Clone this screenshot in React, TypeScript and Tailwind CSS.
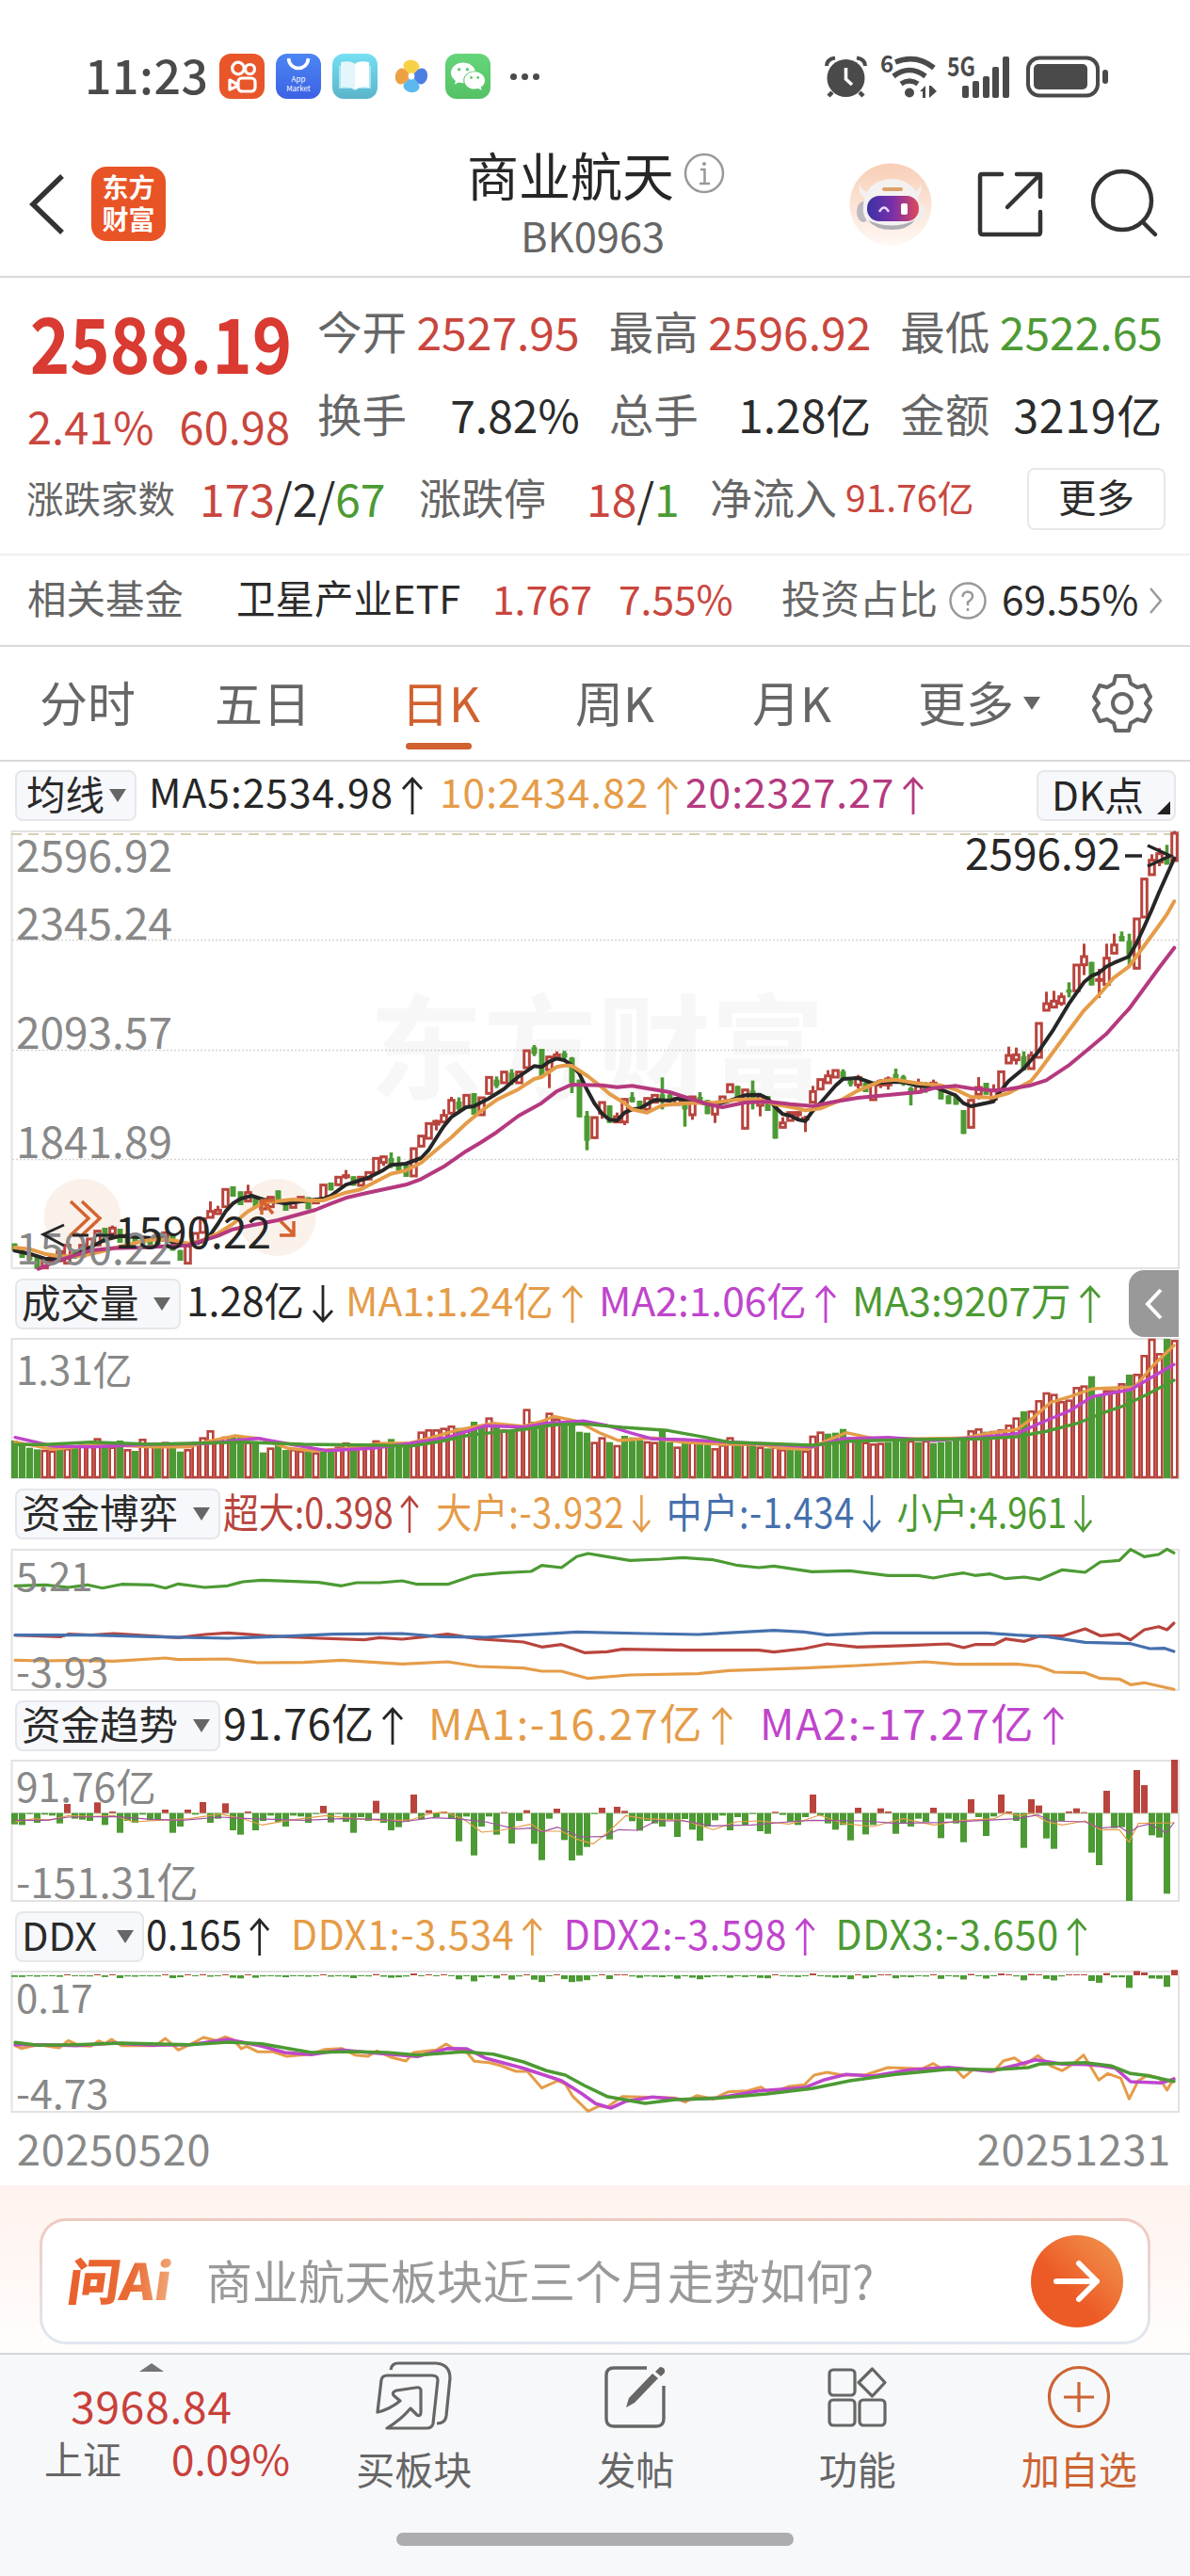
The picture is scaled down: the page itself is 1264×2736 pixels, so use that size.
import React from 'react';
import { clsx } from 'clsx';
import { IoLogoWechat } from 'react-icons/io5';

type Point = [number, number];
type Candle = [string, number, number, number?, number?];

const RED = '#b8443d';
const GREEN = '#4c9a33';
const ORANGE = '#e59c48';
const PURPLE = '#bf45cc';
const MAGENTA = '#b5397f';
const BLUE = '#4570ad';
const FONT = '"Noto Sans CJK SC", "Noto Sans", sans-serif';

// [direction, body top, body bottom, high, low]
const candles: Candle[] = [
  ['g', 1352, 1375], ['g', 1370, 1398], ['g', 1380, 1405], ['g', 1393, 1433], ['r', 1400, 1433], ['r', 1393, 1415],
  ['r', 1375, 1410], ['r', 1355, 1418], ['g', 1380, 1400], ['r', 1355, 1395], ['r', 1335, 1385], ['r', 1310, 1360],
  ['g', 1302, 1350], ['r', 1300, 1325, 1295, 1335], ['g', 1305, 1350], ['g', 1320, 1360], ['g', 1325, 1355], ['g', 1330, 1355],
  ['g', 1335, 1358], ['g', 1325, 1360], ['r', 1315, 1345], ['g', 1325, 1375], ['g', 1373, 1407], ['r', 1355, 1418],
  ['r', 1317, 1355], ['r', 1270, 1320], ['r', 1247, 1272, 1218], ['r', 1243, 1260, 1232], ['r', 1177, 1238], ['g', 1170, 1203],
  ['g', 1186, 1230], ['r', 1187, 1220, 1165], ['g', 1205, 1237], ['r', 1218, 1245], ['r', 1202, 1238], ['g', 1183, 1218],
  ['g', 1215, 1248], ['r', 1220, 1240], ['r', 1202, 1222], ['g', 1205, 1243], ['r', 1212, 1226], ['r', 1163, 1212],
  ['g', 1158, 1183], ['r', 1138, 1168], ['r', 1133, 1143, 1118, 1147], ['g', 1138, 1168], ['r', 1138, 1170], ['r', 1123, 1150],
  ['r', 1078, 1130], ['r', 1073, 1097, 1073, 1105], ['g', 1080, 1105, 1062, 1112], ['g', 1095, 1120, 1075, 1128], ['g', 1100, 1140], ['r', 1047, 1140],
  ['r', 1007, 1045], ['r', 967, 1020], ['r', 960, 975, 958, 992], ['r', 941, 968, 925], ['r', 893, 940, 885], ['g', 900, 925, 887, 935],
  ['r', 877, 920], ['g', 873, 942], ['r', 885, 945], ['r', 820, 877], ['g', 830, 850, 820, 857], ['r', 803, 843],
  ['g', 808, 840, 797, 847], ['r', 803, 843], ['r', 735, 795], ['g', 727, 748, 720, 755], ['g', 732, 818], ['r', 755, 802, 753, 857],
  ['r', 748, 765, 740], ['g', 745, 760, 738, 765], ['g', 760, 840, 758, 873], ['g', 830, 950], ['g', 945, 1025, 930, 1055], ['r', 948, 1018],
  ['r', 900, 940, 900, 955], ['g', 912, 968], ['r', 945, 968, 935], ['r', 890, 968, 890, 975], ['g', 885, 902, 870], ['g', 897, 928],
  ['r', 887, 928], ['r', 877, 905], ['g', 877, 897, 823, 925], ['g', 878, 892, 872, 900], ['r', 887, 912], ['g', 890, 925, 885, 980],
  ['r', 882, 945, 882, 958], ['g', 885, 900, 870, 905], ['g', 895, 940], ['r', 908, 943, 905, 968], ['r', 882, 905], ['r', 843, 872],
  ['g', 850, 895], ['r', 860, 988], ['g', 865, 905, 833, 925], ['r', 880, 915, 878, 947], ['g', 882, 930], ['g', 915, 1018],
  ['r', 965, 985, 950], ['r', 932, 963], ['r', 932, 945, 930, 952], ['r', 950, 953, 945, 997], ['r', 865, 905, 850], ['r', 827, 863],
  ['r', 815, 843, 800], ['r', 798, 825], ['g', 803, 828, 797], ['g', 833, 845, 828, 852], ['r', 820, 850, 815, 858], ['g', 840, 870],
  ['r', 842, 897], ['r', 832, 850, 828, 857], ['r', 825, 850, 820, 862], ['g', 812, 835, 795, 842], ['g', 820, 845, 815, 850], ['g', 857, 875, 853, 912],
  ['r', 838, 873, 827], ['g', 842, 865, 838, 872], ['r', 838, 850, 830], ['g', 860, 893], ['g', 880, 908], ['g', 885, 910],
  ['g', 927, 1003], ['r', 893, 985], ['r', 852, 880, 822, 893], ['g', 840, 878], ['r', 862, 895, 845],
  ['r', 802, 868], ['r', 750, 780, 725], ['r', 748, 770, 728, 782], ['g', 755, 800, 740], ['r', 750, 798, 740], ['r', 648, 762],
  ['r', 585, 612, 550], ['r', 577, 602, 547], ['r', 563, 590, 553, 595], ['g', 543, 553, 520, 568], ['r', 462, 550], ['r', 435, 467, 397, 497],
  ['g', 455, 530], ['r', 508, 515, 477, 570], ['r', 440, 530, 397], ['r', 398, 430, 365], ['g', 372, 390, 358], ['g', 388, 435, 365, 470],
  ['r', 315, 478], ['r', 188, 315], ['r', 128, 180, 112], ['r', 107, 140, 92, 150], ['g', 120, 145, 82], ['r', 42, 135, 38],
];

const ma5Left: Point[] = [[38, 1375], [77, 1385], [116, 1400], [155, 1405], [195, 1390], [234, 1365], [273, 1340], [312, 1328], [371, 1333], [430, 1338], [469, 1355], [489, 1358], [528, 1345], [547, 1325], [567, 1290], [587, 1250], [606, 1225], [626, 1210], [655, 1200], [685, 1212], [743, 1225], [802, 1215], [841, 1210], [861, 1200], [900, 1165], [958, 1143], [998, 1118], [1017, 1102], [1056, 1098], [1096, 1080], [1115, 1055], [1154, 980], [1174, 950], [1213, 918], [1233, 915], [1272, 890], [1311, 860], [1350, 820], [1390, 787], [1409, 790], [1429, 773], [1448, 763], [1468, 768], [1487, 783], [1507, 810]];
const ma5Right: Point[] = [[0, 865], [18, 905], [38, 938], [57, 958], [77, 960], [97, 935], [116, 925], [136, 922], [175, 895], [214, 897], [234, 890], [273, 900], [332, 910], [371, 897], [410, 880], [449, 878], [469, 890], [489, 918], [508, 940], [528, 945], [547, 957], [567, 962], [586, 930], [606, 905], [645, 850], [665, 828], [704, 825], [743, 842], [782, 838], [821, 838], [861, 850], [900, 852], [958, 880], [978, 905], [998, 915], [1056, 900], [1076, 865], [1096, 835], [1135, 795], [1174, 740], [1213, 670], [1252, 590], [1292, 520], [1311, 500], [1331, 490], [1350, 470], [1370, 458], [1409, 438], [1429, 395], [1448, 345], [1468, 290], [1487, 235], [1507, 180], [1527, 125]];
const ma10Left: Point[] = [[38, 1365], [77, 1370], [116, 1385], [155, 1393], [195, 1392], [234, 1387], [293, 1368], [371, 1345], [410, 1338], [450, 1342], [489, 1352], [528, 1342], [567, 1320], [606, 1290], [645, 1250], [685, 1222], [723, 1217], [763, 1212], [802, 1215], [841, 1215], [900, 1190], [939, 1180], [978, 1155], [1017, 1130], [1056, 1120], [1096, 1095], [1154, 1035], [1174, 1015], [1213, 970], [1252, 930], [1292, 895], [1350, 860], [1390, 828], [1409, 822], [1448, 790], [1468, 785], [1487, 785]];
const ma10Right: Point[] = [[0, 818], [38, 855], [57, 875], [97, 905], [116, 925], [155, 935], [194, 912], [253, 905], [332, 903], [391, 893], [449, 895], [489, 908], [547, 922], [567, 928], [606, 922], [665, 892], [704, 865], [763, 835], [802, 830], [861, 842], [919, 848], [958, 862], [998, 885], [1056, 887], [1096, 873], [1154, 835], [1174, 805], [1213, 740], [1252, 675], [1292, 610], [1331, 560], [1370, 505], [1409, 470], [1448, 405], [1487, 340], [1507, 305], [1527, 262]];
const ma20Left: Point[] = [[100, 1433], [155, 1405], [195, 1390], [234, 1375], [293, 1367], [371, 1365], [450, 1360], [489, 1358], [567, 1328], [606, 1307], [645, 1297], [723, 1278], [821, 1245], [861, 1225], [900, 1207], [958, 1190], [1056, 1165], [1096, 1147], [1154, 1108], [1213, 1058], [1252, 1030], [1292, 998], [1350, 945], [1409, 905], [1448, 868], [1487, 846]];
const ma20Right: Point[] = [[38, 848], [77, 854], [116, 850], [155, 858], [214, 870], [273, 893], [312, 908], [351, 918], [410, 903], [469, 900], [528, 908], [586, 914], [645, 900], [704, 888], [802, 877], [861, 870], [900, 857], [958, 850], [998, 858], [1056, 865], [1096, 860], [1154, 848], [1194, 832], [1252, 785], [1311, 725], [1350, 685], [1390, 630], [1409, 605], [1448, 540], [1487, 475], [1527, 410]];

const volumeColors =
  'gggg' + 'rrgrgrrrgrgrgrrgrggrrrrrrggrggrggrrgrggrrgrrrrgggrrrrrrgrggrgrgrrggrrggggrrgrggg' +
  'rrggrgrggrrrgrgrgrrggrrrgggrgrrrgggrgrgggggrrgrrrrgrrrrrrrrggrrrgrrrrgr';
const volumes = [
  540, 555, 563, 568, 570, 572, 560, 565, 560, 555, 553, 533, 550, 560, 540, 568, 573, 535, 555, 563, 545, 548, 575, 568, 545, 530,
  508, 545, 528, 525, 530, 545, 548, 578, 563, 555, 570, 568, 572, 570, 578, 572, 565, 560, 547, 560, 555, 555, 540, 548, 535, 545,
  545, 548, 512, 505, 505, 500, 493, 500, 508, 480, 495, 467, 490, 505, 510, 500, 440, 480, 478, 452, 470, 480, 490, 512, 515, 545,
  530, 545, 555, 525, 530, 540, 543, 545, 505, 545, 560, 548, 545, 550, 553, 565, 553, 530, 545, 550, 550, 560, 565, 560, 568, 570,
  565, 572, 525, 512, 518, 515, 503, 530, 540, 545, 550, 548, 545, 540, 538, 540, 545, 540, 548, 545, 543, 540, 535, 508, 502, 512,
  510, 505, 490, 467, 447, 445, 412, 387, 392, 415, 410, 370, 365, 335, 395, 380, 380, 358, 330, 328, 268, 216, 262, 216, 220,
];

// Net capital flow per day, drawn from the zero line at 377
const flows = [
  413, 415, 380, 408, 382, 385, 410, 348, 395, 398, 402, 343, 415, 372, 440, 402, 408, 382, 400, 400, 366, 440, 420, 366, 382, 342,
  408, 395, 346, 432, 446, 372, 432, 402, 385, 405, 420, 385, 388, 408, 380, 354, 407, 380, 405, 440, 390, 402, 338, 408, 432, 422,
  405, 318, 397, 368, 390, 372, 395, 467, 388, 512, 420, 388, 446, 374, 474, 402, 368, 475, 527, 395, 363, 463, 528, 512, 485, 380,
  360, 461, 357, 370, 403, 433, 402, 410, 420, 400, 453, 396, 430, 465, 420, 400, 385, 432, 390, 415, 380, 435, 443, 373, 383, 405,
  415, 390, 318, 385, 410, 430, 415, 464, 360, 445, 415, 362, 372, 443, 410, 420, 395, 405, 360, 457, 395, 410, 470, 333, 390, 450,
  388, 318, 372, 402, 488, 333, 353, 458, 491, 402, 372, 362, 374, 503, 543, 306, 425, 422, 657, 240, 288, 448, 455, 634, 207,
];

const volMa1: Point[] = [[20, 545], [70, 568], [130, 553], [200, 560], [250, 560], [270, 545], [310, 525], [345, 535], [380, 565], [410, 572], [450, 568], [500, 550], [540, 548], [570, 530], [600, 508], [650, 485], [690, 495], [715, 478], [730, 463], [760, 478], [790, 515], [815, 540], [860, 532], [900, 545], [950, 552], [1000, 552], [1030, 565], [1065, 568], [1090, 540], [1115, 515], [1150, 533], [1200, 535], [1270, 532], [1300, 518], [1340, 505], [1360, 470], [1385, 418], [1410, 400], [1440, 375], [1495, 370], [1520, 300], [1547, 237]];
const volMa2: Point[] = [[20, 530], [70, 558], [120, 560], [200, 552], [270, 550], [340, 533], [390, 555], [430, 572], [490, 565], [540, 550], [590, 530], [640, 493], [690, 497], [720, 485], [770, 478], [800, 492], [830, 515], [860, 535], [900, 537], [1000, 550], [1070, 560], [1110, 535], [1170, 530], [1230, 540], [1290, 530], [1340, 518], [1370, 485], [1410, 445], [1440, 400], [1490, 378], [1520, 335], [1547, 298]];
const volMa3: Point[] = [[20, 553], [60, 553], [120, 545], [200, 552], [320, 545], [400, 552], [500, 555], [540, 558], [580, 543], [620, 522], [690, 505], [730, 490], [770, 487], [820, 498], [880, 508], [930, 530], [960, 545], [1070, 555], [1120, 542], [1200, 537], [1290, 535], [1340, 528], [1380, 510], [1420, 485], [1450, 455], [1480, 430], [1510, 395], [1547, 348]];

const retail: Point[] = [[20, 1003], [60, 1000], [90, 1008], [115, 1000], [135, 1010], [160, 998], [200, 1000], [218, 1010], [235, 997], [270, 1008], [300, 1003], [320, 990], [345, 985], [380, 988], [420, 992], [450, 1003], [470, 993], [500, 993], [530, 987], [550, 998], [590, 998], [625, 970], [660, 962], [700, 957], [714, 938], [740, 945], [760, 910], [775, 900], [800, 910], [830, 922], [870, 918], [900, 913], [940, 920], [970, 937], [1000, 945], [1020, 940], [1070, 958], [1120, 955], [1170, 970], [1210, 970], [1230, 978], [1255, 967], [1270, 962], [1285, 970], [1305, 965], [1325, 980], [1350, 975], [1370, 983], [1400, 952], [1430, 960], [1450, 927], [1475, 922], [1490, 887], [1508, 910], [1527, 903], [1538, 886], [1547, 898]];
const medium: Point[] = [[20, 1160], [120, 1160], [200, 1165], [300, 1170], [360, 1165], [440, 1157], [530, 1155], [580, 1165], [640, 1167], [690, 1160], [760, 1150], [850, 1155], [920, 1158], [1020, 1145], [1060, 1150], [1090, 1160], [1150, 1153], [1300, 1153], [1340, 1160], [1380, 1165], [1430, 1183], [1490, 1187], [1515, 1203], [1535, 1202], [1547, 1212]];
const superLarge: Point[] = [[20, 1160], [80, 1165], [90, 1157], [120, 1160], [150, 1155], [200, 1163], [235, 1168], [270, 1158], [300, 1153], [350, 1162], [420, 1170], [480, 1175], [500, 1168], [530, 1173], [560, 1165], [590, 1157], [630, 1172], [690, 1182], [714, 1198], [740, 1190], [770, 1216], [800, 1213], [820, 1205], [900, 1208], [1000, 1208], [1020, 1214], [1060, 1203], [1090, 1188], [1130, 1198], [1200, 1193], [1250, 1188], [1270, 1200], [1285, 1190], [1310, 1190], [1325, 1172], [1350, 1180], [1370, 1163], [1400, 1163], [1430, 1140], [1450, 1162], [1475, 1157], [1490, 1175], [1508, 1143], [1527, 1133], [1538, 1143], [1547, 1122]];
const large: Point[] = [[20, 1240], [60, 1242], [100, 1240], [150, 1243], [218, 1233], [235, 1238], [300, 1236], [340, 1248], [400, 1247], [450, 1240], [530, 1252], [590, 1245], [630, 1260], [690, 1265], [714, 1275], [740, 1275], [775, 1298], [830, 1287], [920, 1283], [960, 1273], [1060, 1265], [1130, 1257], [1220, 1245], [1260, 1253], [1340, 1252], [1370, 1260], [1390, 1278], [1430, 1280], [1450, 1298], [1475, 1300], [1490, 1318], [1508, 1312], [1547, 1333]];

const flowMa1: Point[] = [[20, 405], [45, 395], [65, 400], [90, 385], [120, 388], [150, 385], [175, 405], [210, 400], [250, 395], [290, 380], [320, 395], [345, 415], [380, 400], [430, 385], [470, 395], [500, 400], [540, 400], [565, 380], [585, 373], [610, 395], [635, 438], [660, 432], [700, 412], [714, 435], [740, 435], [760, 460], [782, 475], [800, 440], [825, 385], [850, 395], [900, 400], [940, 430], [970, 405], [1000, 402], [1040, 412], [1060, 400], [1080, 383], [1110, 410], [1150, 420], [1190, 395], [1230, 415], [1270, 400], [1310, 395], [1325, 378], [1345, 385], [1360, 378], [1380, 405], [1400, 415], [1430, 402], [1450, 430], [1475, 430], [1488, 470], [1500, 410], [1547, 408]];
const flowMa2: Point[] = [[20, 400], [60, 400], [90, 390], [150, 388], [200, 397], [240, 400], [290, 390], [330, 395], [400, 400], [450, 395], [500, 397], [530, 405], [570, 392], [600, 395], [640, 405], [680, 428], [700, 425], [714, 437], [735, 422], [765, 453], [795, 452], [815, 430], [840, 432], [865, 402], [900, 402], [940, 418], [990, 415], [1040, 405], [1070, 400], [1140, 402], [1180, 410], [1240, 407], [1300, 400], [1340, 395], [1368, 383], [1385, 402], [1430, 405], [1450, 425], [1475, 420], [1488, 440], [1500, 420], [1515, 412], [1537, 440], [1547, 408]];

const ddx1: Point[] = [[20, 1118], [28, 1127], [50, 1115], [78, 1125], [90, 1102], [105, 1118], [120, 1120], [130, 1103], [138, 1112], [147, 1098], [160, 1118], [205, 1118], [218, 1095], [235, 1132], [250, 1115], [268, 1092], [285, 1102], [297, 1090], [308, 1100], [318, 1128], [325, 1120], [340, 1138], [360, 1138], [378, 1152], [410, 1145], [428, 1130], [450, 1127], [468, 1148], [485, 1152], [497, 1135], [515, 1155], [535, 1167], [545, 1140], [575, 1132], [588, 1113], [600, 1130], [612, 1130], [625, 1168], [645, 1172], [660, 1182], [680, 1200], [695, 1200], [714, 1253], [735, 1230], [745, 1240], [755, 1280], [775, 1327], [790, 1310], [800, 1315], [820, 1280], [870, 1283], [890, 1285], [903, 1298], [918, 1277], [940, 1288], [960, 1265], [985, 1262], [1003, 1250], [1015, 1270], [1040, 1248], [1060, 1243], [1073, 1212], [1090, 1203], [1110, 1212], [1140, 1212], [1170, 1188], [1215, 1192], [1230, 1175], [1240, 1190], [1258, 1190], [1270, 1220], [1283, 1193], [1310, 1200], [1322, 1167], [1337, 1157], [1350, 1180], [1368, 1150], [1385, 1183], [1400, 1198], [1415, 1175], [1428, 1148], [1448, 1228], [1460, 1207], [1477, 1222], [1488, 1288], [1500, 1230], [1513, 1212], [1528, 1222], [1538, 1260], [1547, 1222]];
const ddx2: Point[] = [[20, 1115], [60, 1115], [100, 1118], [150, 1110], [200, 1117], [250, 1115], [300, 1098], [345, 1120], [375, 1140], [410, 1147], [450, 1132], [500, 1143], [550, 1153], [590, 1127], [615, 1128], [640, 1158], [690, 1190], [740, 1230], [765, 1268], [785, 1303], [805, 1317], [825, 1295], [860, 1282], [900, 1290], [945, 1285], [1000, 1262], [1060, 1252], [1085, 1228], [1115, 1210], [1150, 1215], [1200, 1195], [1250, 1187], [1305, 1200], [1340, 1180], [1365, 1163], [1400, 1177], [1430, 1178], [1450, 1182], [1470, 1190], [1490, 1233], [1530, 1237], [1547, 1225]];
const ddx3: Point[] = [[20, 1108], [50, 1117], [100, 1115], [160, 1110], [250, 1115], [300, 1107], [345, 1112], [380, 1127], [410, 1140], [460, 1137], [510, 1140], [550, 1148], [610, 1138], [650, 1145], [690, 1170], [720, 1198], [745, 1212], [770, 1245], [800, 1280], [850, 1302], [890, 1290], [950, 1285], [1010, 1272], [1070, 1255], [1120, 1230], [1180, 1210], [1250, 1193], [1310, 1195], [1355, 1188], [1370, 1177], [1430, 1172], [1465, 1183], [1490, 1207], [1510, 1213], [1547, 1232]];

const joinHalves = (left: Point[], right: Point[]): Point[] => [...left, ...right.map(([x, y]): Point => [x + 1528.8, y])];
const barX = (i: number) => 15.5 + i * 8;

function Line({ data, sx, top, color, width = 4 }: { data: Point[]; sx: number; top: number; color: string; width?: number }) {
  const points = data.map(([x, y]) => `${(x * sx).toFixed(1)},${((y - top) / 3).toFixed(1)}`).join(' ');
  return <polyline points={points} fill="none" stroke={color} strokeWidth={width} strokeLinejoin="round" strokeLinecap="round" />;
}

function AxisText({ x = 17, y, children, size = 43, color = '#888888' }: { x?: number; y: number; children: string; size?: number; color?: string }) {
  return <text x={x} y={y} fontSize={size} fill={color} fontFamily={FONT}>{children}</text>;
}

function Frame({ height }: { height: number }) {
  return <rect x="12.5" y="1" width="1239.5" height={height - 2} fill="none" stroke="#e2e2e2" strokeWidth="2" />;
}

function Arrow({ down }: { down?: boolean }) {
  return (
    <svg width="24" height="40" viewBox="0 0 24 40" fill="none" stroke="currentColor" strokeWidth="2.8" className={clsx('mt-1 shrink-0', down && 'rotate-180')}>
      <path d="M12 40V2M2 13L12 2L22 13" />
    </svg>
  );
}

function Caret() {
  return (
    <svg width="18" height="14" viewBox="0 0 18 14" fill="#666">
      <path d="M0 0H18L9 14Z" />
    </svg>
  );
}

function Pill({ label, className }: { label: string; className: string }) {
  return (
    <div className={clsx('flex h-[54px] shrink-0 items-center justify-between rounded-lg border-2 border-[#e6e7ea] bg-[#f7f8fb] text-[41.5px] leading-none whitespace-nowrap text-[#2a2a2a]', className)}>
      <span className="pb-1">{label}</span>
      <Caret />
    </div>
  );
}

function Legend({ text, down, className }: { text: string; down?: boolean; className: string }) {
  return (
    <div className={clsx('flex shrink-0 items-center gap-2 pb-1 leading-none whitespace-nowrap', className)}>
      <span className="pb-1">{text}</span>
      <Arrow down={down} />
    </div>
  );
}

function StatusBar() {
  return (
    <div className="flex h-[129px] items-center pt-[33px] pl-[90px]">
      <span className="w-[143px] pb-[6px] text-[50px] leading-none font-medium tracking-[0.5px] text-[#4a4a4a]">11:23</span>
      <div className="flex gap-3">
        <div className="size-12 rounded-xl bg-[#e9562a]">
          <svg viewBox="0 0 48 48" fill="none" stroke="#fff" strokeWidth="3.2">
            <circle cx="20" cy="15.5" r="6.3" />
            <circle cx="32.5" cy="16.5" r="5" />
            <rect x="20" y="26" width="18" height="14" rx="4" />
            <path d="M11 28L18 32V35L11 38Z" strokeLinejoin="round" />
          </svg>
        </div>
        <div className="flex size-12 flex-col items-center rounded-xl bg-gradient-to-b from-[#4c86f3] to-[#3d61e4] text-[8px] leading-[9.5px] text-white">
          <svg width="48" height="22" viewBox="0 0 48 22" fill="none" stroke="#fff" strokeWidth="3.6" className="shrink-0">
            <path d="M13.500 5C14.500 19 33.500 19 34.500 5" />
          </svg>
          <span>App</span>
          <span>Market</span>
        </div>
        <div className="size-12 rounded-xl bg-gradient-to-b from-[#76e0f3] to-[#5ab4ca]">
          <svg viewBox="0 0 48 48">
            <path d="M7 13H41V37H28L24 39L20 37H7Z" fill="#a9e6f2" />
            <path d="M9 9Q20 7 24 11V38Q18 34 9 36Z" fill="#e4f6fb" />
            <path d="M39 9Q28 7 24 11V38Q30 34 39 36Z" fill="#fff" />
          </svg>
        </div>
        <svg className="size-12" viewBox="0 0 48 48">
          {['#f7d247', '#4b7fe2', '#5cb9f0', '#eda044'].map((color, i) => (
            <path key={color} d="M24 24C21 20 15 18 15.500 12C17 5 30 5 32.500 13C33 18 28 19 24 24Z" fill={color} transform={`rotate(${i * 90} 24 24)`} />
          ))}
          <circle cx="24" cy="24" r="3.400" fill="#fff" />
        </svg>
        <div className="flex size-12 items-center justify-center rounded-xl bg-gradient-to-b from-[#66d579] to-[#55c165]">
          <IoLogoWechat className="size-9 text-white" />
        </div>
      </div>
      <div className="ml-[21px] flex gap-[5px]">
        <i className="size-[7px] rounded-full bg-[#4a4a4a]" />
        <i className="size-[7px] rounded-full bg-[#4a4a4a]" />
        <i className="size-[7px] rounded-full bg-[#4a4a4a]" />
      </div>
      <svg width="320" height="60" viewBox="0 0 320 60" className="ml-[297px] overflow-visible" fill="none" stroke="#4a4a4a">
        <g>
          <circle cx="28.500" cy="32" r="20" fill="#4a4a4a" stroke="none" />
          <path d="M8 19Q8 12 17 10.500M49 19Q49 12 40 10.500" strokeWidth="4" />
          <path d="M14 47L10 51M43 47L47 51" strokeWidth="4.500" />
          <path d="M28.500 21V33L35 39" stroke="#fff" strokeWidth="3.600" />
        </g>
        <text x="65" y="26" fontSize="24" fontWeight="700" fill="#4a4a4a" stroke="none" fontFamily={FONT}>6</text>
        <g strokeWidth="5.500">
          <path d="M81 15Q103 6 122 21" />
          <path d="M79 30Q96 17 113 30" />
          <path d="M87 38Q96 32 105 38" />
          <circle cx="96" cy="47.500" r="5" fill="#4a4a4a" stroke="none" />
        </g>
        <path d="M107 46L113 40V53H110V46ZM117 40H119L125 46L117 53Z" fill="#4a4a4a" stroke="none" />
        <text x="136" y="30" fontSize="28" fontWeight="700" fill="#4a4a4a" stroke="none" fontFamily={FONT} textLength="30" lengthAdjust="spacingAndGlyphs">5G</text>
        <g fill="#4a4a4a" stroke="none">
          <rect x="152" y="40" width="7" height="13" rx="2" />
          <rect x="163" y="35" width="7" height="18" rx="2" />
          <rect x="174" y="30" width="7" height="23" rx="2" />
          <rect x="184" y="20" width="7" height="33" rx="2" />
          <rect x="195" y="9" width="7" height="44" rx="2" />
        </g>
        <rect x="222" y="10.500" width="74" height="40" rx="12" strokeWidth="4" />
        <rect x="228" y="17" width="57" height="27" rx="5" fill="#4a4a4a" stroke="none" />
        <rect x="301" y="23" width="6" height="15" rx="3" fill="#4a4a4a" stroke="none" />
      </svg>
    </div>
  );
}

function TitleBar() {
  return (
    <header className="flex h-[166px] items-center border-b-2 border-[#d9d9d9] px-[30px]">
      <div className="flex w-[466px] shrink-0 items-center pt-[11px]">
        <svg width="40" height="66" viewBox="0 0 40 66" fill="none" stroke="#333" strokeWidth="5.500">
          <path d="M36 3L5 33L36 63" />
        </svg>
        <div className="ml-[27px] grid size-[79px] place-content-center rounded-2xl bg-[#e85426] pb-[3px] text-center text-[28px] leading-[34px] font-bold text-white">
          <span>东方</span>
          <span>财富</span>
        </div>
      </div>
      <div className="flex flex-col pt-[6px]">
        <div className="flex items-center gap-[10px]">
          <h1 className="text-[55px] leading-[64px] text-[#262626]">商业航天</h1>
          <svg width="44" height="44" viewBox="0 0 44 44" fill="none" stroke="#999" strokeWidth="2.500">
            <circle cx="22" cy="22" r="20" />
            <path d="M18 18H22.500V33M17 33H28" />
            <circle cx="22" cy="12" r="2" fill="#999" stroke="none" />
          </svg>
        </div>
        <span className="mt-2 pl-[57px] text-[43.500px] leading-[52px] text-[#666]">BK0963</span>
      </div>
      <div className="ml-auto flex w-[332px] items-center pt-[11px]">
        <svg width="88" height="88" viewBox="0 0 88 88">
          <defs>
            <linearGradient id="halo" x1="0" y1="0" x2="0" y2="1">
              <stop offset="0" stopColor="#f8ceb6" />
              <stop offset="1" stopColor="#fff8f4" />
            </linearGradient>
            <linearGradient id="visor" x1="0" y1="0" x2="1" y2="0">
              <stop offset="0" stopColor="#3a32a6" />
              <stop offset=".5" stopColor="#7a2fa8" />
              <stop offset="1" stopColor="#e04b5a" />
            </linearGradient>
          </defs>
          <circle cx="44" cy="44" r="43.500" fill="url(#halo)" />
          <path d="M11 22Q13 31 22 31L18 38Q9 34 11 22ZM76 22Q75 31 65 31L69 38Q79 34 76 22Z" fill="#f4f0f0" />
          <ellipse cx="15" cy="52" rx="7" ry="11" fill="#bdb9c0" />
          <ellipse cx="75" cy="52" rx="6" ry="9" fill="#f1eded" />
          <path d="M15 45Q18 18 45 17Q72 18 75 45Q78 69 45 70Q12 69 15 45Z" fill="#f4f1f1" />
          <path d="M20 61Q45 72 70 61Q62 71 45 71Q28 71 20 61Z" fill="#aeacb4" />
          <rect x="35" y="26" width="22" height="4" rx="2" fill="#dba26d" />
          <rect x="19" y="35" width="55" height="27" rx="13" fill="url(#visor)" />
          <path d="M32 52Q37 43 42 52" fill="none" stroke="#e9d9ff" strokeWidth="2.500" />
          <rect x="55" y="43" width="7" height="12" rx="2" fill="#fff" />
        </svg>
        <svg width="72" height="72" viewBox="0 0 72 72" fill="none" stroke="#333" strokeWidth="4.500" strokeLinecap="round" strokeLinejoin="round" className="ml-[47px]">
          <path d="M27 4H6Q4 4 4 6V65Q4 68 7 68H66Q68 68 68 65V44" />
          <path d="M43 4H68V28M67 5L33 39" />
        </svg>
        <svg width="76" height="76" viewBox="0 0 76 76" fill="none" stroke="#333" strokeWidth="4.500" strokeLinecap="round" className="ml-[46px]">
          <circle cx="37" cy="34" r="31" />
          <path d="M59 57L72 70" />
        </svg>
      </div>
    </header>
  );
}

function Quote({ label, value, className }: { label: string; value: string; className: string }) {
  return (
    <div className="flex h-[88px] items-center justify-between pb-[2px] leading-none whitespace-nowrap">
      <span className="text-[47.5px] text-[#666]">{label}</span>
      <span className={clsx('text-[48px]', className)}>{value}</span>
    </div>
  );
}

function QuotePanel() {
  return (
    <section className="h-[295px] border-b-2 border-[#efefef] pt-[13px] text-[#2b2b2b]">
      <div className="flex h-[176px] pr-[29px] pl-[29px]">
        <div className="w-[308px]">
          <div className="h-[112px] origin-left scale-x-[0.89] pl-[3px] text-[81px] leading-[108px] font-bold text-[#d93a31]">2588.19</div>
          <div className="flex w-[279px] justify-between text-[47px] leading-[64px] text-[#c9463e]">
            <span>2.41%</span>
            <span>60.98</span>
          </div>
        </div>
        <div className="grid flex-1 grid-cols-3 gap-x-[31px]">
          <Quote label="今开" value="2527.95" className="text-[#c9463e]" />
          <Quote label="最高" value="2596.92" className="text-[#c9463e]" />
          <Quote label="最低" value="2522.65" className="text-[#4c9a33]" />
          <Quote label="换手" value="7.82%" className="" />
          <Quote label="总手" value="1.28亿" className="" />
          <Quote label="金额" value="3219亿" className="tracking-[0.8px]" />
        </div>
      </div>
      <div className="flex h-[92px] items-center justify-between pr-[26px] pl-[28px] leading-none whitespace-nowrap">
        <span className="w-[184px] pb-[5px] text-[39.5px] text-[#666]">涨跌家数</span>
        <span className="w-[233px] pb-[5px] text-[48px]">
          <b className="font-normal text-[#c9463e]">173</b>/2/<b className="font-normal text-[#4c9a33]">67</b>
        </span>
        <span className="w-[178px] pb-[5px] text-[45px] text-[#666]">涨跌停</span>
        <span className="w-[131px] pb-[5px] text-[48px]">
          <b className="font-normal text-[#c9463e]">18</b>/<b className="font-normal text-[#4c9a33]">1</b>
        </span>
        <span className="w-[144px] pb-[5px] text-[45px] text-[#666]">净流入</span>
        <span className="w-[193px] pb-[5px] text-[39px] text-[#c9463e]">91.76亿</span>
        <button className="h-[66px] w-[147px] rounded-lg border-2 border-[#e8e8e8] pb-[5px] text-[40.5px]">更多</button>
      </div>
    </section>
  );
}

function FundRow() {
  return (
    <section className="flex h-[97px] items-center border-b-2 border-[#dadada] px-[29px] text-[41.5px] leading-none whitespace-nowrap text-[#2b2b2b]">
      <span className="w-[222px] pb-[5px] text-[#666]">相关基金</span>
      <span className="w-[272px] pb-[5px]">卫星产业ETF</span>
      <span className="w-[134px] pb-[5px] text-[42.500px] text-[#c9463e]">1.767</span>
      <span className="w-[173px] pb-[5px] text-[42.500px] text-[#c9463e]">7.55%</span>
      <span className="w-[178px] pb-[5px] text-[#666]">投资占比</span>
      <svg width="40" height="40" viewBox="0 0 40 40" fill="none" stroke="#999" strokeWidth="2.500">
        <circle cx="20" cy="20" r="18.500" />
        <path d="M14.500 16Q15 10.500 20 10.500Q25.500 11 25 16Q24.500 18.500 20 21.500V25M20 28V31" />
      </svg>
      <span className="ml-4 pb-[5px] text-[42.500px]">69.55%</span>
      <svg width="14" height="28" viewBox="0 0 14 28" fill="none" stroke="#999" strokeWidth="2.500" className="ml-auto">
        <path d="M1 1L12 14L1 27" />
      </svg>
    </section>
  );
}

function PeriodTabs() {
  return (
    <nav className="flex h-[122px] items-center border-b-2 border-[#d9d9d9] pl-[42px] text-[51px] leading-none whitespace-nowrap text-[#666]">
      <span className="w-[186px] pb-[3px]">分时</span>
      <span className="w-[198px] pb-[3px]">五日</span>
      <div className="relative w-[185px] pb-[3px] text-[#d1612f]">
        日K
        <i className="absolute top-[69px] left-[5px] h-[7px] w-[70px] rounded-full bg-[#d1612f]" />
      </div>
      <span className="w-[188px] pb-[3px]">周K</span>
      <span className="w-[176px] pb-[3px]">月K</span>
      <span className="w-[112px] pb-[3px]">更多</span>
      <Caret />
      <svg width="64" height="64" viewBox="0 0 64 64" fill="none" stroke="#666" strokeWidth="4" strokeLinejoin="round" className="ml-[55px]">
        <path d="M25 3H39L41 11L48 15L56 13L62 25L57 32L62 39L56 51L48 49L41 53L39 61H25L23 53L16 49L8 51L2 39L7 32L2 25L8 13L16 15L23 11Z" />
        <circle cx="32" cy="32" r="10" />
      </svg>
    </nav>
  );
}

function PriceChart() {
  const top = 36;
  return (
    <svg width="1264" height="466" viewBox="0 0 1264 466" className="block overflow-visible">
      <text x="392" y="276" fontSize="121" fontWeight="700" fill="#f7f7f7" fontFamily={FONT}>东方财富</text>
      <Frame height={466} />
      <path d="M13 116.500H1252M13 233.500H1252M13 349.500H1252" stroke="#d4d4d4" strokeWidth="1.500" strokeDasharray="2 2" />
      <path d="M12 4H1252" stroke="#d6cfb3" strokeWidth="2" strokeDasharray="11 7" />
      <circle cx="87.500" cy="411" r="41" fill="#fbf1eb" />
      <circle cx="294.500" cy="411" r="41" fill="#fbf1eb" />
      {candles.map(([dir, open, close, high = open, low = close], i) => {
        const x = barX(i);
        const y = (v: number) => (v - top) / 3;
        if (dir === 'g') {
          return (
            <g key={i} fill={GREEN}>
              <rect x={x - 1.8} y={y(high)} width="3.6" height={y(low) - y(high)} />
              <rect x={x - 3} y={y(open)} width="6" height={y(close) - y(open)} />
            </g>
          );
        }
        return (
          <g key={i} stroke={RED} strokeWidth="3" fill="#fff">
            <path d={`M${x} ${y(high)}V${y(low)}`} />
            <rect x={x - 2.8} y={y(open) + 1} width="5.6" height={Math.max(1, y(close) - y(open) - 2)} />
          </g>
        );
      })}
      <Line data={joinHalves(ma5Left, ma5Right)} sx={1 / 2.45} top={top} color="#262626" />
      <Line data={joinHalves(ma10Left, ma10Right)} sx={1 / 2.45} top={top} color={ORANGE} />
      <Line data={joinHalves(ma20Left, ma20Right)} sx={1 / 2.45} top={top} color={MAGENTA} />
      <AxisText y={43.5} size={46}>2596.92</AxisText>
      <AxisText y={116} size={46}>2345.24</AxisText>
      <AxisText y={232} size={46}>2093.57</AxisText>
      <AxisText y={348} size={46}>1841.89</AxisText>
      <AxisText y={461} size={46}>1590.22</AxisText>
      <g fill="none" stroke="#d4632f" strokeWidth="3.500">
        <path d="M75 394L94 412L75 430M87 394L106 412L87 430" />
        <path d="M278 408V393H292M279 394L290 407M298 415L312 429M297 430H312V415" />
      </g>
      <AxisText x={122} y={444} size={46} color="#262626">1590.22</AxisText>
      <path d="M68 419L46 429L68 441M77 430H94M102 430H121" stroke="#262626" strokeWidth="3" fill="none" />
      <AxisText x={1025} y={41.5} size={46} color="#262626">2596.92</AxisText>
      <path d="M1195 27H1213M1219 16L1243 27L1219 38" stroke="#262626" strokeWidth="3.500" fill="none" />
    </svg>
  );
}

function VolumeChart() {
  return (
    <svg width="1264" height="150" viewBox="0 0 1264 150" className="block overflow-visible">
      <Frame height={150} />
      <AxisText y={50} size={42}>1.31亿</AxisText>
      {volumes.map((v, i) => {
        const y = (v - 213) / 3;
        return volumeColors[i] === 'g'
          ? <rect key={i} x={barX(i) - 3.6} y={y} width="7.2" height={149 - y} fill={GREEN} />
          : <rect key={i} x={barX(i) - 2.8} y={y + 1} width="5.6" height={147 - y} fill="#fff" stroke={RED} strokeWidth="2.6" />;
      })}
      <Line data={volMa1} sx={0.806} top={213} color={ORANGE} width={3.4} />
      <Line data={volMa2} sx={0.806} top={213} color={PURPLE} width={3.4} />
      <Line data={volMa3} sx={0.806} top={213} color={GREEN} width={3.4} />
    </svg>
  );
}

function PlayersChart() {
  return (
    <svg width="1264" height="151" viewBox="0 0 1264 151" className="block overflow-visible">
      <Frame height={151} />
      <Line data={retail} sx={0.806} top={885} color={GREEN} width={3.2} />
      <Line data={superLarge} sx={0.806} top={885} color={RED} width={3.2} />
      <Line data={medium} sx={0.806} top={885} color={BLUE} width={3.2} />
      <Line data={large} sx={0.806} top={885} color={ORANGE} width={3.2} />
      <AxisText y={45} size={42}>5.21</AxisText>
      <AxisText y={147} size={43}>-3.93</AxisText>
    </svg>
  );
}

function FlowChart() {
  return (
    <svg width="1264" height="151" viewBox="0 0 1264 151" className="block overflow-visible">
      <Frame height={151} />
      <AxisText y={45} size={42.5}>91.76亿</AxisText>
      <AxisText y={147} size={44}>-151.31亿</AxisText>
      <path d="M13 57H1252" stroke="#a9c9a0" strokeWidth="1" />
      {flows.map((v, i) => (
        <rect key={i} x={barX(i) - 3.5} y={(Math.min(v, 377) - 207) / 3} width="7" height={Math.abs(v - 377) / 3} fill={v > 377 ? GREEN : RED} />
      ))}
      <Line data={flowMa1} sx={0.806} top={207} color={ORANGE} width={1.2} />
      <Line data={flowMa2} sx={0.806} top={207} color="#a050a0" width={1.2} />
    </svg>
  );
}

function DdxChart() {
  return (
    <svg width="1264" height="151" viewBox="0 0 1264 151" className="block overflow-visible">
      <Frame height={151} />
      {flows.map((v, i) => {
        const size = Math.max(1, Math.abs(v - 377) / (v > 377 ? 21 : 30));
        return <rect key={i} x={barX(i) - 3.5} y={v > 377 ? 5 : 5 - size} width="7" height={size} fill={v > 377 ? GREEN : RED} />;
      })}
      <Line data={ddx1} sx={0.806} top={879} color={ORANGE} width={3} />
      <Line data={ddx2} sx={0.806} top={879} color={PURPLE} width={3.6} />
      <Line data={ddx3} sx={0.806} top={879} color={GREEN} width={3.6} />
      <AxisText y={45} size={42}>0.17</AxisText>
      <AxisText y={147} size={43}>-4.73</AxisText>
    </svg>
  );
}

function AskBar() {
  return (
    <section className="h-[178px] bg-gradient-to-b from-[#fef2ee] to-[#fffdfc] px-[42px] pt-[35px]">
      <div className="h-[134px] rounded-[28px] bg-gradient-to-b from-[#efc9c0] to-[#e0e7f0] p-[3px]">
        <div className="flex h-full items-center rounded-[25px] bg-white pr-[26px] pl-[26px]">
          <svg width="114" height="50" viewBox="0 0 114 50" className="overflow-visible">
            <defs>
              <linearGradient id="ask" x1="0" y1="0" x2="1" y2="0">
                <stop offset="0" stopColor="#e9602b" />
                <stop offset=".6" stopColor="#ea6a34" />
                <stop offset="1" stopColor="#f0a878" />
              </linearGradient>
            </defs>
            <text x="2" y="45" fontSize="53" fontWeight="900" fill="url(#ask)" fontFamily={FONT} transform="skewX(-8) translate(3 0)" textLength="110" lengthAdjust="spacingAndGlyphs">问Ai</text>
          </svg>
          <span className="ml-[34px] pb-[5px] text-[49px] leading-none text-[#999]">商业航天板块近三个月走势如何?</span>
          <div className="ml-auto grid size-[98px] place-items-center rounded-full bg-gradient-to-tr from-[#ec5a26] from-40% to-[#f0984f]">
            <svg width="50" height="46" viewBox="0 0 50 46" fill="none" stroke="#fff" strokeWidth="6" strokeLinecap="round" strokeLinejoin="round">
              <path d="M3 23H46M27 4L46 23L27 42" />
            </svg>
          </div>
        </div>
      </div>
    </section>
  );
}

function NavItem({ label, className, children }: { label: string; className?: string; children: React.ReactNode }) {
  return (
    <div className={clsx('flex flex-1 flex-col items-center pt-[7px]', className)}>
      <div className="grid h-[76px] place-items-center">{children}</div>
      <span className="mt-[15px] text-[41px] leading-[44px]">{label}</span>
    </div>
  );
}

function BottomNav() {
  return (
    <footer className="h-[237px] border-t-2 border-[#d5d7da] bg-[#f7f8fa]">
      <div className="flex h-[189px] text-[#666]">
        <div className="flex w-[322px] flex-col items-center pt-[9px] leading-none">
          <svg width="26" height="9" viewBox="0 0 26 9" fill="#757578"><path d="M0 9L13 0L26 9Z" /></svg>
          <span className="mt-[12px] text-[46px] tracking-[0.8px] text-[#c9403a]">3968.84</span>
          <div className="mt-[11px] flex w-[260px] items-center justify-between self-end pr-0 text-[41px]">
            <span className="-ml-[15px]">上证</span>
            <span className="mr-[14px] text-[44px] text-[#c9403a]">0.09%</span>
          </div>
        </div>
        <NavItem label="买板块">
          <svg width="84" height="76" viewBox="0 0 84 76" fill="none" stroke="#666" strokeWidth="3.200" strokeLinejoin="round">
            <path d="M17 9Q18 2 25 2H65Q80 3 80 18L76 58Q75 66 66 66" />
            <path d="M3 54L7 20Q8 15 13 15H61Q67 15 67 20L62 66Q61 71 55 71H13Q28 62 38 50L45 57Q49 59 49 54V30Q48 27 43 28L23 31Q17 33 21 37L27 42Q16 51 3 54Z" />
          </svg>
        </NavItem>
        <NavItem label="发帖">
          <svg width="68" height="68" viewBox="0 0 68 68" fill="none" stroke="#666" strokeWidth="3.400">
            <path d="M46 3H11Q3 3 3 11V57Q3 65 11 65H56Q64 65 64 57V22" />
            <path d="M24 45L27 35L52 9L58 14L33 40Z" fill="#666" stroke="none" />
            <path d="M55 7L60 2Q66 2 65 8L61 12Z" fill="#666" stroke="none" />
          </svg>
        </NavItem>
        <NavItem label="功能">
          <svg width="64" height="64" viewBox="0 0 64 64" fill="none" stroke="#666" strokeWidth="3.200" strokeLinejoin="round">
            <rect x="2" y="3" width="27" height="27" rx="4" />
            <rect x="2" y="35" width="27" height="27" rx="4" />
            <rect x="34" y="35" width="27" height="27" rx="4" />
            <path d="M47.500 2L61 16.500L47.500 31L33 16.500Z" />
          </svg>
        </NavItem>
        <NavItem label="加自选" className="text-[#cc6433]">
          <svg width="68" height="68" viewBox="0 0 68 68" fill="none" stroke="currentColor" strokeWidth="3.200">
            <circle cx="34" cy="34" r="31.500" />
            <path d="M34 18V50M18 34H50" />
          </svg>
        </NavItem>
      </div>
      <div className="mx-auto h-[14px] w-[422px] rounded-full bg-[#adadb0]" />
    </footer>
  );
}

export default function App() {
  return (
    <div className="h-[2736px] w-[1264px] overflow-hidden bg-white font-['Noto_Sans_CJK_SC','Noto_Sans',sans-serif]">
      <StatusBar />
      <TitleBar />
      <QuotePanel />
      <FundRow />
      <PeriodTabs />

      <div className="flex h-[73px] items-center pb-[2px] pl-4 text-[42.500px] tracking-[1px]">
        <Pill label="均线" className="w-[129px] pr-[9px] pl-[10px] tracking-normal" />
        <Legend text="MA5:2534.98" className="ml-[13px] w-[309px] text-[#262626]" />
        <Legend text="10:2434.82" className="w-[261px] text-[#e59c48]" />
        <Legend text="20:2327.27" className="text-[#b5397f]" />
        <div className="relative mr-[15px] ml-auto flex h-[54px] w-[148px] items-center rounded-lg border-2 border-[#e6e7ea] bg-[#f7f8fb] pb-1 pl-[14px] text-[42px] leading-none tracking-normal text-[#262626]">
          DK点
          <svg width="14" height="14" viewBox="0 0 14 14" className="absolute right-1 bottom-[5px]"><path d="M14 0V14H0Z" fill="#222" /></svg>
        </div>
      </div>
      <PriceChart />

      <div className="flex h-[73px] items-center pl-4 text-[42.500px]">
        <Pill label="成交量" className="w-[176px] pr-[9px] pl-[5px]" />
        <Legend text="1.28亿" down className="ml-[6px] w-[169px] text-[#262626]" />
        <Legend text="MA1:1.24亿" className="w-[269px] text-[#e59c48]" />
        <Legend text="MA2:1.06亿" className="w-[269px] text-[#bf45cc]" />
        <Legend text="MA3:9207万" className="text-[#4c9a33]" />
        <div className="mr-3 ml-auto grid h-[71px] w-[53px] shrink-0 place-items-center rounded-l-2xl bg-[#999]">
          <svg width="20" height="34" viewBox="0 0 20 34" fill="none" stroke="#fff" strokeWidth="4"><path d="M17 2L3 17L17 32" /></svg>
        </div>
      </div>
      <VolumeChart />

      <div className="flex h-[74px] items-center pl-4 text-[43px]">
        <Pill label="资金博弈" className="w-[218px] pr-[9px] pl-[5px]" />
        <div className="ml-[3px] flex origin-left scale-x-[0.88]">
          <Legend text="超大:0.398" className="w-[257px] text-[#b8443d]" />
          <Legend text="大户:-3.932" down className="w-[278px] tracking-[0.8px] text-[#e59c48]" />
          <Legend text="中户:-1.434" down className="w-[278px] tracking-[0.8px] text-[#4570ad]" />
          <Legend text="小户:4.961" down className="text-[#4c9a33]" />
        </div>
      </div>
      <PlayersChart />

      <div className="flex h-[73px] items-center pl-4 text-[45px] tracking-[1.600px]">
        <Pill label="资金趋势" className="w-[218px] pr-[9px] pl-[5px] tracking-normal" />
        <Legend text="91.76亿" className="ml-[3px] w-[218px] tracking-[0.5px] text-[#262626]" />
        <Legend text="MA1:-16.27亿" className="w-[352px] text-[#e59c48]" />
        <Legend text="MA2:-17.27亿" className="text-[#bf45cc]" />
      </div>
      <FlowChart />

      <div className="flex h-[73px] items-center pl-4 text-[43px]">
        <Pill label="DDX" className="w-[137px] pr-[9px] pl-[5px]" />
        <div className="ml-[2px] flex origin-left scale-x-[0.95] tracking-[0.800px]">
          <Legend text="0.165" className="w-[162px] tracking-normal text-[#262626]" />
          <Legend text="DDX1:-3.534" className="w-[305px] text-[#e59c48]" />
          <Legend text="DDX2:-3.598" className="w-[304px] text-[#bf45cc]" />
          <Legend text="DDX3:-3.650" className="text-[#4c9a33]" />
        </div>
      </div>
      <DdxChart />

      <div className="flex h-[77px] items-center justify-between pr-[20px] pb-[5px] pl-[18px] text-[45px] leading-none tracking-[0.800px] text-[#888]">
        <span>20250520</span>
        <span>20251231</span>
      </div>
      <AskBar />
      <BottomNav />
    </div>
  );
}
